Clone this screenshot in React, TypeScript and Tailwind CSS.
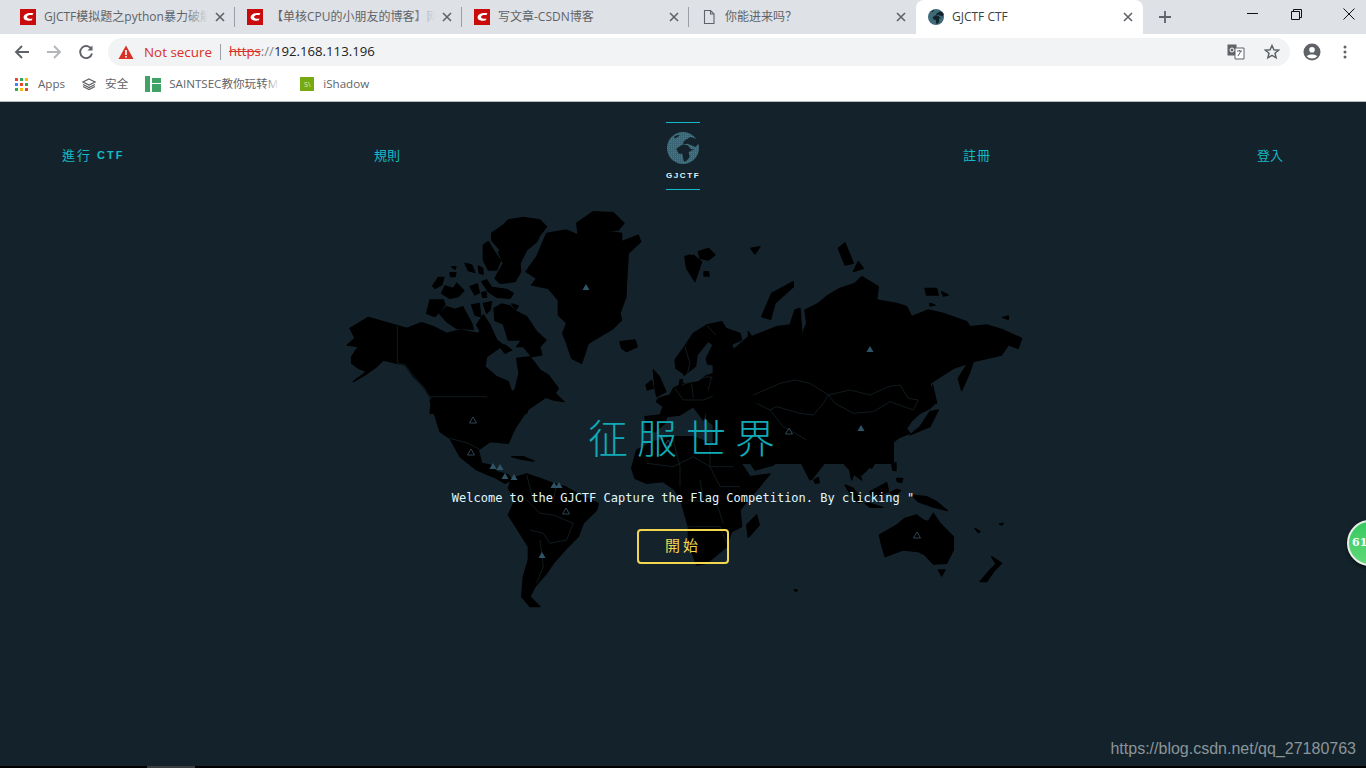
import React from "react";

const BG = "#14232b";
const CJK = "'Open Sans','Noto Sans CJK SC',sans-serif";

function Land({ p }: { p: string }) {
  return <polygon points={p} fill="#000" stroke="#000" strokeWidth={4} strokeLinejoin="round" />;
}
function Water({ p }: { p: string }) {
  return <polygon points={p} fill={BG} stroke={BG} strokeWidth={3} strokeLinejoin="round" />;
}
function Line({ p }: { p: string }) {
  return <polyline points={p} fill="none" stroke="#18292f" strokeWidth={2} strokeLinejoin="round" />;
}
function Tri({ x, y, filled }: { x: number; y: number; filled?: boolean }) {
  const pts = `${x - 3.5},${y + 3} ${x + 3.5},${y + 3} ${x},${y - 3}`;
  return filled ? (
    <polygon points={pts} fill="#2f5468" />
  ) : (
    <polygon points={pts} fill="none" stroke="#2c4755" strokeWidth={1} />
  );
}

function WorldMap() {
  return (
    <svg className="absolute left-0 top-0" width={1366} height={666} viewBox="0 102 1366 666">
      <g transform="translate(340 200) scale(0.3333)">
        <Land p="710,70 760,35 820,38 852,70 835,90 790,92 845,100 845,125 895,105 902,125 865,160 860,240 858,290 840,340 845,360 820,385 770,415 745,430 725,490 695,475 680,430 668,400 680,370 655,345 655,300 625,265 575,255 590,235 558,215 590,170 620,100 680,90 715,105" />
        <Land p="455,100 490,75 505,60 550,52 600,60 620,80 600,105 590,125 560,150 540,190 542,215 525,245 480,250 465,235 490,190 475,155 510,150 480,150 455,120" />
        <Land p="430,135 445,125 460,150 482,182 470,210 445,210 430,180" />
        <Land p="375,190 395,195 405,218 385,212" />
        <Land p="415,198 428,205 430,222 418,220" />
        <Land p="335,200 348,200 345,208" />
        <Land p="330,218 348,218 345,230 332,230" />
        <Land p="278,258 295,232 312,232 305,255 285,265" />
        <Land p="305,280 315,258 340,265 350,250 372,272 355,290 330,295" />
        <Land p="390,260 412,252 418,278 405,285" />
        <Land p="425,245 440,240 455,262 500,268 520,280 510,295 470,292 445,275" />
        <Land p="425,278 438,275 440,292 428,292" />
        <Land p="270,300 310,300 315,315 285,350 260,340" />
        <Land p="298,340 320,320 345,328 368,320 395,370 400,388 350,385 320,365" />
        <Land p="395,315 418,310 422,350 405,345" />
        <Land p="430,310 455,305 450,330 440,340" />
        <Land p="462,325 485,312 510,318 530,335 560,350 590,395 618,420 600,440 605,465 575,470 550,440 530,440 545,420 505,420 490,372 465,362" />
        <Land p="515,312 535,318 528,328" />
        <Land p="480,440 495,435 515,450 495,460" />
        <Land p="840,425 885,420 892,440 860,455 845,445" />
        <Land p="918,555 935,542 940,565 922,570" />
        <Land p="940,510 958,530 978,575 950,590 945,565" />
        <Land p="1035,170 1050,165 1050,220" />
        <Land p="30,385 85,352 130,365 175,378 200,385 245,368 280,380 320,400 360,390 415,400 440,375 470,420 490,435 440,470 435,500 470,530 505,545 515,575 525,570 537,520 530,475 570,470 600,510 625,525 655,565 645,580 672,605 640,600 610,590 570,610 560,640 270,640 275,600 250,560 220,530 195,495 170,490 130,480 110,500 75,525 40,545 80,515 55,505 35,490 35,470 55,440 22,435 45,415" />
        <Land p="410,375 430,345 450,375 470,420 430,410" />
        <Line p="172,378 172,490 195,495 222,530 250,560 275,600" />
        <Line p="270,590 435,590 462,602" />
      </g>
      <g transform="translate(440 400) scale(0.3333)">
        <Land p="-30,0 0,95 30,115 60,170 110,210 170,235 195,250 215,240 205,225 170,215 150,195 125,190 115,150 150,125 205,130 225,85 262,30 320,-10" />
        <Land p="215,235 260,222 300,235 340,250 375,260 420,285 475,310 470,330 430,370 415,410 375,450 340,490 320,520 285,560 270,590 300,620 270,620 245,590 250,530 265,480 265,440 240,400 205,345 225,300 205,265" />
        <Land p="215,170 250,170 282,183 245,178" />
        <Land p="575,205 590,150 640,125 700,110 760,110 810,130 880,140 900,185 930,230 990,222 950,270 900,330 905,380 875,395 860,440 800,490 770,495 745,430 745,380 725,310 705,270 670,245 620,250 585,235" />
        <Land p="950,345 958,375 925,412 920,375" />
        <Land p="885,120 895,135 945,210 1000,195 1040,165 1025,140 1005,130 1050,155 1085,150 1085,190 1110,240 1135,190 1170,150 1200,155 1215,195 1245,225 1265,240 1250,195 1270,175 1295,205 1310,180 1345,140 1385,105 1410,70 1425,45 1400,-20 800,-20 800,60" />
        <Line p="30,115 85,130 118,148" />
        <Line p="260,300 300,340 340,345 400,370 380,420 330,430 310,400 270,390" />
        <Line p="300,420 310,500 290,550" />
        <Line p="260,225 280,300 340,300 350,255" />
        <Line p="620,190 700,200 760,170 810,200 880,200" />
        <Line p="700,120 720,200 720,260" />
        <Line p="810,130 810,200 840,260 900,260" />
        <Line p="745,300 830,310 850,370" />
        <Line p="745,380 840,380 860,430" />
        <Line p="780,240 790,300" />
      </g>
      <g transform="translate(640 320) scale(0.3333)">
        <Land p="105,120 130,85 160,40 200,15 245,5 258,25 300,40 305,60 270,75 285,95 400,60 400,300 300,320 240,300 200,260 190,300 160,260 120,285 80,290 75,310 45,335 20,335 15,290 60,285 70,260 50,245 55,235 90,225 100,205 118,195 120,180 140,178 130,160 108,145" />
        <Water p="130,172 170,140 175,105 205,68 215,75 195,115 200,135 232,140 225,155 195,165 175,182 130,188" />
        <Water p="230,262 262,250 300,262 290,282 240,282" />
        <Water p="346,248 362,250 372,290 350,285" />
        <Line p="135,80 150,130 140,170" />
        <Line p="200,15 240,60 225,100 235,140" />
        <Line p="125,195 200,170 235,175 290,225 300,250" />
        <Line p="105,205 130,240 190,240 240,220" />
        <Line p="205,210 215,170" />
        <Line p="155,190 160,235" />
        <Line p="300,250 330,210 430,180" />
        <Line p="385,260 440,300" />
      </g>
      <g transform="translate(680 230) scale(0.3333)">
        <Land p="130,285 150,320 160,360 205,320 205,305 215,320 290,290 330,285 345,240 360,235 365,300 360,330 380,280 375,240 415,220 445,195 480,175 525,160 545,140 595,170 590,210 650,220 680,230 695,260 745,240 790,250 860,275 870,290 920,285 970,300 1025,325 1015,355 985,345 965,375 880,395 820,415 750,460 765,520 750,535 720,550 675,590 690,610 640,630 640,700 100,700 100,330" />
        <Land p="15,85 40,75 65,95 45,155 20,115" />
        <Land p="55,65 85,55 105,75 85,90 60,85" />
        <Land p="72,125 85,125 88,138 72,138" />
        <Land p="212,55 240,50 225,72" />
        <Land p="475,55 495,38 520,100 495,105" />
        <Land p="520,125 535,95 550,115" />
        <Land p="735,175 770,175 775,195 740,195" />
        <Land p="785,185 805,195 790,198" />
        <Land p="750,220 765,225 750,228" />
        <Land p="968,262 985,258 985,268" />
        <Land p="245,260 275,190 340,155 340,170 285,220 272,268" />
        <Land p="885,380 870,425 845,482 835,445 860,405" />
        <Land p="758,465 770,520 755,520" />
        <Land p="690,615 750,590 775,540 750,545 720,590" />
        <Line p="445,495 510,480 570,495 625,470 660,465 685,505 715,510 700,540 630,515 580,545 520,550 465,520 445,495" />
        <Line p="220,495 300,460 345,450 390,460 445,495 430,520 400,555 360,550 290,530 270,540 230,520" />
        <Line p="270,540 310,590 380,630" />
      </g>
      <g transform="translate(790 420) scale(0.3333)">
        <Land p="72,180 85,172 88,188 76,190" />
        <Land p="165,195 190,205 220,245 205,248 180,220" />
        <Land p="240,215 290,188 296,215 265,228 245,228" />
        <Land p="225,250 240,250 278,262 240,262" />
        <Land p="300,218 320,208 332,212 315,225" />
        <Land p="305,130 318,128 318,152 308,150" />
        <Land p="320,175 338,175 335,188 322,185" />
        <Land p="365,225 410,230 440,245 472,272 425,260 385,245" />
        <Land p="268,345 320,315 345,295 380,285 400,300 415,305 430,280 450,310 490,350 490,390 470,430 430,432 405,405 385,395 340,390 285,410 275,375" />
        <Land p="445,450 465,450 455,468" />
        <Land p="605,410 635,430 615,450 590,485 570,485 600,450 618,432" />
        <Land p="555,325 570,335 565,338" />
        <Land p="628,312 640,310 635,315" />
        <Land p="12,510 22,510 18,514" />
        <Land p="30,90 60,90 130,95 65,178 40,130" />
        <Land p="170,120 215,105 250,105 240,140 215,165 195,150 185,180 175,130" />
      </g>
      <Tri x={586} y={287} filled />
      <Tri x={870} y={349} filled />
      <Tri x={861} y={428} filled />
      <Tri x={493} y={466} filled />
      <Tri x={500} y={467} filled />
      <Tri x={505} y={476} filled />
      <Tri x={514} y={477} filled />
      <Tri x={554} y={485} filled />
      <Tri x={559} y={485} filled />
      <Tri x={542} y={555} filled />
      <Tri x={473} y={420} />
      <Tri x={471} y={452} />
      <Tri x={566} y={511} />
      <Tri x={789} y={431} />
      <Tri x={917} y={535} />
      <Tri x={668} y={443} />
    </svg>
  );
}

function CsdnIcon() {
  return (
    <svg width="16" height="16" viewBox="0 0 16 16" className="shrink-0">
      <rect width="16" height="16" fill="#c90b0b" />
      <path d="M13.5 4.2 C8 3.2 3.8 5 3.6 8.2 C3.5 11 7 12.2 11.6 11.6 L12.6 9.4 C9.6 10 7 9.8 7.1 8 C7.2 6.4 9.8 5.8 12.2 6.2 Z" fill="#fff" />
    </svg>
  );
}
function DocIcon() {
  return (
    <svg width="16" height="16" viewBox="0 0 16 16" className="shrink-0" fill="none" stroke="#5f6368" strokeWidth="1.1">
      <path d="M3.5 1.5h6l3.5 3.5v9.5h-9.5z" />
      <path d="M9.5 1.5v3.5H13" />
    </svg>
  );
}
function Globe({ size }: { size: number }) {
  return (
    <svg width={size} height={size} viewBox="0 0 32 32" className="shrink-0">
      <defs>
        <pattern id={`dots${size}`} width="2" height="2" patternUnits="userSpaceOnUse">
          <rect width="2" height="2" fill="#3a6574" />
          <rect width="1" height="1" fill="#487a8a" />
        </pattern>
      </defs>
      <circle cx="16" cy="16" r="16" fill={`url(#dots${size})`} />
      <path d="M9.3 16.7 L15 12.7 L20.7 13.3 L24 17.3 L27.3 17.3 L21.7 20 L22.7 25 L19.3 29.3 L16.7 29.3 L15.3 21.7 L11.7 21.7 Z" fill="#14232b" />
      <path d="M16.7 9.3 L23.3 5 L30 7 L31.7 11.7 L28.3 15 L20.7 11.7 L16 12.7 Z" fill="#14232b" />
      <path d="M7 4.5 L11 3 L13 3.6 L8 6.5 Z" fill="#14232b" />
    </svg>
  );
}
function CloseX() {
  return (
    <svg width="10" height="10" viewBox="0 0 10 10" stroke="#5f6368" strokeWidth="1.6" className="shrink-0">
      <path d="M1 1l8 8M9 1l-8 8" />
    </svg>
  );
}

function Tab({ title, icon, sep = true }: { title: string; icon: React.ReactNode; sep?: boolean }) {
  return (
    <div className="relative flex h-[34px] w-[227px] shrink-0 items-center pl-3">
      {icon}
      <div className="relative ml-2 h-[18px] w-[164px] overflow-hidden whitespace-nowrap text-xs leading-[18px] text-[#5f6368]" style={{ fontFamily: CJK }}>
        {title}
        <div className="absolute right-0 top-0 h-full w-6 bg-gradient-to-r from-transparent to-[#dee1e6]" />
      </div>
      <div className="ml-[7px]"><CloseX /></div>
      {sep && <div className="absolute right-0 top-[7px] h-5 w-px bg-[#9aa0a6]" />}
    </div>
  );
}

function Browser() {
  return (
    <div className="shrink-0 bg-white">
      <div className="flex h-[34px] items-center bg-[#dee1e6] pl-2">
        <Tab title="GJCTF模拟题之python暴力破解" icon={<CsdnIcon />} />
        <Tab title="【单核CPU的小朋友的博客】网络" icon={<CsdnIcon />} />
        <Tab title="写文章-CSDN博客" icon={<CsdnIcon />} />
        <Tab title="你能进来吗？" icon={<DocIcon />} sep={false} />
        <div className="flex h-[34px] w-[227px] shrink-0 items-center rounded-t-lg bg-white pl-3">
          <Globe size={16} />
          <div className="ml-2 w-[164px] text-xs text-[#3c4043]" style={{ fontFamily: CJK }}>GJCTF CTF</div>
          <div className="ml-[7px]"><CloseX /></div>
        </div>
        <svg width="14" height="14" viewBox="0 0 14 14" stroke="#5f6368" strokeWidth="1.8" className="ml-[15px] shrink-0">
          <path d="M7 1v12M1 7h12" />
        </svg>
        <svg width="11" height="2" viewBox="0 0 11 2" className="ml-[75px] mb-[6px] shrink-0"><rect width="11" height="1" fill="#111" /></svg>
        <svg width="11" height="11" viewBox="0 0 11 11" fill="none" stroke="#111" className="ml-[33px] mb-[6px] shrink-0">
          <path d="M.5 2.5h8v8h-8zM2.5 2.5v-2h8v8h-2" />
        </svg>
        <svg width="12" height="12" viewBox="0 0 12 12" stroke="#111" className="ml-[41px] mb-[6px] shrink-0"><path d="M.5.5l11 11M11.5.5l-11 11" /></svg>
      </div>
      <div className="flex h-[36px] items-center">
        <svg width="16" height="16" viewBox="0 0 16 16" fill="none" stroke="#5f6368" strokeWidth="1.9" className="ml-[14px] shrink-0"><path d="M15 8H2M8 2L2 8l6 6" /></svg>
        <svg width="16" height="16" viewBox="0 0 16 16" fill="none" stroke="#b4b7ba" strokeWidth="1.9" className="ml-4 shrink-0"><path d="M1 8h13M8 2l6 6-6 6" /></svg>
        <svg width="16" height="16" viewBox="0 0 16 16" fill="none" stroke="#5f6368" strokeWidth="1.9" className="ml-4 shrink-0"><path d="M13.6 5.5A6 6 0 1 0 14 9.5" /><path d="M14.5 1.5v5h-5z" fill="#5f6368" stroke="none" /></svg>
        <div className="ml-[14px] flex h-7 w-[1182px] items-center rounded-full bg-[#f1f3f4] pl-[10px]">
          <svg width="16" height="15" viewBox="0 0 16 15" className="shrink-0"><path d="M8 .5L15.5 14H.5z" fill="#d93025" /><rect x="7.2" y="5" width="1.6" height="5" fill="#fff" /><rect x="7.2" y="11" width="1.6" height="1.6" fill="#fff" /></svg>
          <span className="ml-[10px] text-[13.4px] text-[#d93025]" style={{ fontFamily: "'Open Sans',sans-serif" }}>Not secure</span>
          <div className="ml-[8px] h-4 w-px bg-[#9aa0a6]" />
          <div className="ml-2 whitespace-nowrap text-[13.2px]" style={{ fontFamily: "'Open Sans',sans-serif" }}>
            <span className="text-[#d93025] line-through">https</span>
            <span className="text-[#80868b]">://</span>
            <span className="text-[#202124]">192.168.113.196</span>
          </div>
          <div className="flex-1" />
          <svg width="18" height="16" viewBox="0 0 18 16" className="shrink-0">
            <rect x="0.5" y="0.5" width="9" height="11" fill="#5f6368" />
            <path d="M8 4h9v11H8z" fill="#fff" stroke="#5f6368" />
            <circle cx="5" cy="6" r="2" fill="none" stroke="#fff" />
            <path d="M10 7h5M12.5 6v1M11 12l3-5" stroke="#5f6368" fill="none" />
          </svg>
          <svg width="16" height="16" viewBox="0 0 16 16" fill="none" stroke="#5f6368" strokeWidth="1.5" className="ml-[19px] mr-[10px] shrink-0"><path d="M8 1.5l1.9 4.3 4.6.4-3.5 3 1.1 4.6L8 11.4l-4.1 2.4L5 9.2l-3.5-3 4.6-.4z" /></svg>
        </div>
        <svg width="18" height="18" viewBox="0 0 18 18" className="ml-[13px] shrink-0"><circle cx="9" cy="9" r="8.5" fill="#5f6368" /><circle cx="9" cy="6.8" r="2.8" fill="#fff" /><path d="M3.8 13.2c1.5-2.4 8.9-2.4 10.4 0-2.6 2.9-7.8 2.9-10.4 0z" fill="#fff" /></svg>
        <svg width="4" height="14" viewBox="0 0 4 14" fill="#5f6368" className="ml-[22px] shrink-0"><circle cx="2" cy="2" r="1.5" /><circle cx="2" cy="7" r="1.5" /><circle cx="2" cy="12" r="1.5" /></svg>
      </div>
      <div className="flex h-[31px] items-center pb-[3px] text-[11.6px] text-[#5f6368]" style={{ fontFamily: CJK }}>
        <svg width="13" height="13" viewBox="0 0 13 13" className="ml-[15px] shrink-0">
          {[["#ea4335", "#34a853", "#fbbc05"], ["#4285f4", "#ea4335", "#34a853"], ["#34a853", "#fbbc05", "#ea4335"]].map((row, r) =>
            row.map((c, i) => <rect key={`${r}${i}`} x={i * 5} y={r * 5} width="3" height="3" fill={c} />)
          )}
        </svg>
        <span className="ml-[10px]">Apps</span>
        <svg width="14" height="14" viewBox="0 0 14 14" fill="none" stroke="#5f6368" strokeWidth="1.2" className="ml-[17px] shrink-0"><path d="M7 2l6 3-6 3-6-3z" /><path d="M1 7.5l6 3 6-3M1 9.5l6 3 6-3" /></svg>
        <span className="ml-[9px]">安全</span>
        <svg width="16" height="16" viewBox="0 0 16 16" className="ml-[17px] shrink-0"><rect width="5" height="16" fill="#41a266" /><rect x="7" y="2" width="9" height="5" fill="#41a266" /><rect x="7" y="8" width="9" height="8" fill="#41a266" /></svg>
        <div className="relative ml-2 w-[111px] overflow-hidden whitespace-nowrap">
          SAINTSEC教你玩转M
          <div className="absolute right-0 top-0 h-full w-4 bg-gradient-to-r from-transparent to-white" />
        </div>
        <div className="ml-5 flex h-[14px] w-[14px] shrink-0 items-center justify-center bg-[#76a912] text-[7px] leading-none text-[#e4f0c0]">S\</div>
        <span className="ml-[9px]">iShadow</span>
      </div>
      <div className="h-px bg-[#b9bcbf]" />
    </div>
  );
}

function Nav() {
  const font = { fontFamily: "'Noto Sans CJK TC',sans-serif" };
  return (
    <nav className="relative flex h-[68px] items-center pl-[62px] text-[13px] tracking-[2px] text-[#14bac7]" style={font}>
      <div className="mt-[-2px] flex w-[62px] items-center whitespace-nowrap">
        進行<span className="ml-[5px] text-[11px] font-bold tracking-[2px]" style={{ fontFamily: "'Liberation Sans',sans-serif" }}>CTF</span>
      </div>
      <div className="ml-[250px] mt-[-2px] w-[26px] whitespace-nowrap tracking-normal">規則</div>
      <div className="ml-[266px] flex h-[68px] w-[34px] flex-col items-center justify-between">
        <div className="h-px w-[34px] bg-[#14bac7]" />
        <Globe size={32} />
        <div className="text-[8px] font-bold leading-none tracking-[1.6px] text-[#dff6ff]" style={{ fontFamily: "'Liberation Sans',sans-serif" }}>GJCTF</div>
        <div className="h-px w-[34px] bg-[#14bac7]" />
      </div>
      <div className="ml-[263px] mt-[-2px] w-[27px] whitespace-nowrap tracking-[1px]">註冊</div>
      <div className="ml-[267px] mt-[-2px] w-[26px] whitespace-nowrap tracking-normal">登入</div>
    </nav>
  );
}

export default function App() {
  return (
    <div className="flex h-screen w-full flex-col overflow-hidden bg-[#14232b]">
      <Browser />
      <div className="relative flex-1 overflow-hidden">
        <WorldMap />
        <div className="relative flex flex-col items-center pt-5">
          <div className="w-full"><Nav /></div>
          <h1 className="mt-[221px] pl-[6px] text-[40px] font-light leading-[50px] tracking-[9px] text-[#12a9b6]" style={{ fontFamily: "'Noto Sans CJK TC',sans-serif" }}>征服世界</h1>
          <p className="mt-[28px] whitespace-nowrap text-[12px] leading-[18px] text-[#e0f7ff]" style={{ fontFamily: "'DejaVu Sans Mono',monospace" }}>
            Welcome to the GJCTF Capture the Flag Competition. By clicking "
          </p>
          <button className="mt-[22px] flex h-[35px] w-[92px] items-center justify-center rounded border-2 border-[#f2d64f] pb-[3px] text-[15px] tracking-[3px] text-[#f2d64f]" style={{ fontFamily: "'Noto Sans CJK TC',sans-serif" }}>
            開始
          </button>
        </div>
        <div className="absolute right-[-27px] top-[418px] flex h-[46px] w-[46px] items-center rounded-full border-2 border-[#e8efe9] bg-gradient-to-b from-[#35c95f] to-[#5fd877] pl-[3px] text-[11px] font-bold text-white shadow-[0_2px_4px_rgba(0,0,0,0.6)]" style={{ fontFamily: "'DejaVu Serif',serif" }}>
          61
        </div>
        <div className="absolute bottom-[9px] right-[10px] text-[16px] leading-5 text-[#8b959a]" style={{ fontFamily: "'Liberation Sans',sans-serif" }}>
          https://blog.csdn.net/qq_27180763
        </div>
        <div className="absolute bottom-0 left-0 flex h-[2px] w-full bg-black">
          <div className="ml-[147px] w-12 bg-[#3a3d3f]" />
        </div>
      </div>
    </div>
  );
}
